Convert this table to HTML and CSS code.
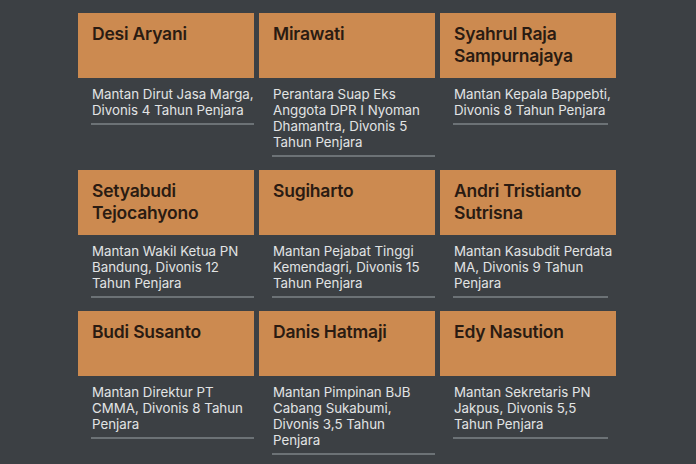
FILE: index.html
```html
<!DOCTYPE html>
<html lang="id">
<head>
  <meta charset="UTF-8">
  <meta name="viewport" content="width=device-width, initial-scale=1.0">
  <title>Vonis Koruptor</title>
  <link rel="stylesheet" href="styles.css">
</head>
<body>
  <div class="grid">
    <div class="card">
      <div class="name">Desi Aryani</div>
      <div class="desc">Mantan Dirut Jasa Marga,<br>Divonis 4 Tahun Penjara</div>
    </div>
    <div class="card">
      <div class="name">Mirawati</div>
      <div class="desc">Perantara Suap Eks<br>Anggota DPR I Nyoman<br>Dhamantra, Divonis 5<br>Tahun Penjara</div>
    </div>
    <div class="card">
      <div class="name">Syahrul Raja<br>Sampurnajaya</div>
      <div class="desc">Mantan Kepala Bappebti,<br>Divonis 8 Tahun Penjara</div>
    </div>

    <div class="card">
      <div class="name">Setyabudi<br>Tejocahyono</div>
      <div class="desc">Mantan Wakil Ketua PN<br>Bandung, Divonis 12<br>Tahun Penjara</div>
    </div>
    <div class="card">
      <div class="name">Sugiharto</div>
      <div class="desc">Mantan Pejabat Tinggi<br>Kemendagri, Divonis 15<br>Tahun Penjara</div>
    </div>
    <div class="card">
      <div class="name">Andri Tristianto<br>Sutrisna</div>
      <div class="desc">Mantan Kasubdit Perdata<br>MA, Divonis 9 Tahun<br>Penjara</div>
    </div>

    <div class="card">
      <div class="name">Budi Susanto</div>
      <div class="desc">Mantan Direktur PT<br>CMMA, Divonis 8 Tahun<br>Penjara</div>
    </div>
    <div class="card">
      <div class="name">Danis Hatmaji</div>
      <div class="desc">Mantan Pimpinan BJB<br>Cabang Sukabumi,<br>Divonis 3,5 Tahun<br>Penjara</div>
    </div>
    <div class="card">
      <div class="name">Edy Nasution</div>
      <div class="desc">Mantan Sekretaris PN<br>Jakpus, Divonis 5,5<br>Tahun Penjara</div>
    </div>
  </div>
</body>
</html>
```

FILE: styles.css
```css
body {
  margin: 0;
  background-color: #3c4044;
  font-family: Inter, "Noto Sans", sans-serif;
  width: 696px;
  height: 464px;
  overflow: hidden;
}
.grid {
  display: grid;
  grid-template-columns: 176px 176px 176px;
  column-gap: 5px;
  row-gap: 13px;
  padding: 13px 0 0 78px;
  align-items: start;
}
.card {
  display: flex;
  flex-direction: column;
}
.name {
  background-color: #cc8a50;
  height: 65px;
  box-sizing: border-box;
  padding: 10px 14px 0;
  font-size: 17.5px;
  line-height: 22px;
  font-weight: 600;
  color: #2a1b12;
  letter-spacing: -0.2px;
  white-space: nowrap;
}
.desc {
  margin-left: 13px;
  padding: 8px 0 5px 1px;
  border-bottom: 2px solid #6c7276;
  font-size: 13.3px;
  line-height: 16px;
  color: #e2e4e4;
  white-space: nowrap;
}
.card:nth-child(3n) .desc {
  margin-right: 8px;
}
```
